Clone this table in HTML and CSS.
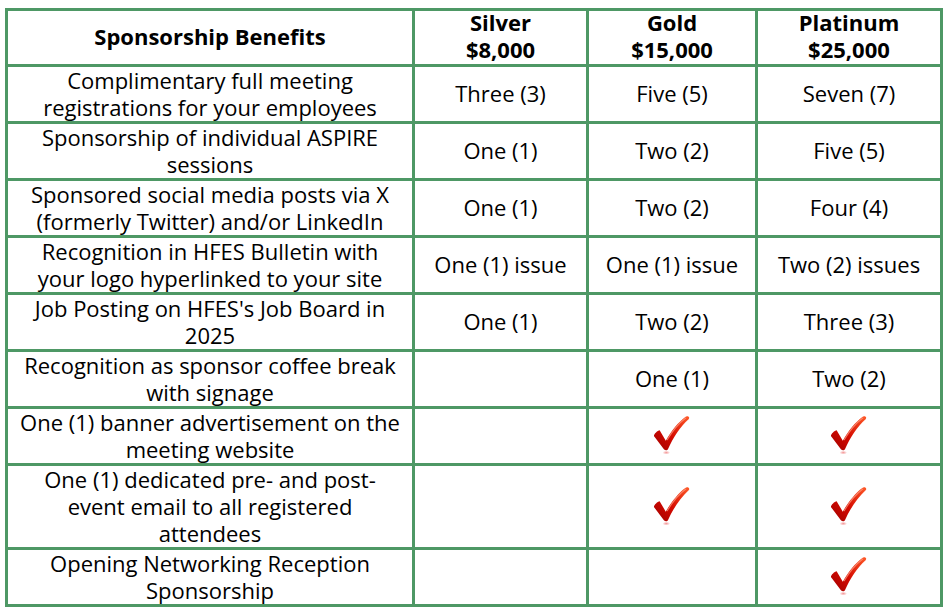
FILE: index.html
```html
<!DOCTYPE html>
<html lang="en">
<head>
<meta charset="utf-8">
<title>Sponsorship Benefits</title>
<link rel="stylesheet" href="styles.css">
</head>
<body>
<svg class="defs" width="0" height="0" aria-hidden="true">
  <defs>
    <linearGradient id="chk" x1="0" y1="1" x2="1" y2="0">
      <stop offset="0" stop-color="#9e0000"/>
      <stop offset="0.45" stop-color="#d40a00"/>
      <stop offset="1" stop-color="#ff5a28"/>
    </linearGradient>
    <radialGradient id="refl" cx="0.5" cy="0.5" r="0.5">
      <stop offset="0" stop-color="#f07a7a" stop-opacity="0.8"/>
      <stop offset="1" stop-color="#f07a7a" stop-opacity="0"/>
    </radialGradient>
    <symbol id="check" viewBox="0 0 42 42">
      <ellipse cx="15" cy="39.5" rx="4" ry="2" fill="url(#refl)"/>
      <path d="M2,22 C2,20 6,16 8,16 L14.5,27 C20,17 28,7 35,2 C37,0.5 40.5,2 38.5,4.5 C30,12 22,24 17,35.5 C16,37.5 14,37.5 12.5,36 Z" fill="url(#chk)"/>
      <path d="M16,26 C22,16 29,8 35.5,3.2" fill="none" stroke="#ff9a80" stroke-width="1.2" stroke-linecap="round" opacity="0.75"/>
    </symbol>
  </defs>
</svg>
<div class="table">
  <div class="cell head">Sponsorship Benefits</div>
  <div class="cell head">Silver<br>$8,000</div>
  <div class="cell head">Gold<br>$15,000</div>
  <div class="cell head">Platinum<br>$25,000</div>

  <div class="cell benefit">Complimentary full meeting<br>registrations for your employees</div>
  <div class="cell">Three (3)</div>
  <div class="cell">Five (5)</div>
  <div class="cell">Seven (7)</div>

  <div class="cell benefit">Sponsorship of individual ASPIRE<br>sessions</div>
  <div class="cell">One (1)</div>
  <div class="cell">Two (2)</div>
  <div class="cell">Five (5)</div>

  <div class="cell benefit">Sponsored social media posts via X<br>(formerly Twitter) and/or LinkedIn</div>
  <div class="cell">One (1)</div>
  <div class="cell">Two (2)</div>
  <div class="cell">Four (4)</div>

  <div class="cell benefit">Recognition in HFES Bulletin with<br>your logo hyperlinked to your site</div>
  <div class="cell">One (1) issue</div>
  <div class="cell">One (1) issue</div>
  <div class="cell">Two (2) issues</div>

  <div class="cell benefit">Job Posting on HFES's Job Board in<br>2025</div>
  <div class="cell">One (1)</div>
  <div class="cell">Two (2)</div>
  <div class="cell">Three (3)</div>

  <div class="cell benefit">Recognition as sponsor coffee break<br>with signage</div>
  <div class="cell"></div>
  <div class="cell">One (1)</div>
  <div class="cell">Two (2)</div>

  <div class="cell benefit">One (1) banner advertisement on the<br>meeting website</div>
  <div class="cell"></div>
  <div class="cell"><svg class="tick"><use href="#check"/></svg></div>
  <div class="cell"><svg class="tick"><use href="#check"/></svg></div>

  <div class="cell benefit">One (1) dedicated pre- and post-<br>event email to all registered<br>attendees</div>
  <div class="cell"></div>
  <div class="cell"><svg class="tick"><use href="#check"/></svg></div>
  <div class="cell"><svg class="tick"><use href="#check"/></svg></div>

  <div class="cell benefit">Opening Networking Reception<br>Sponsorship</div>
  <div class="cell"></div>
  <div class="cell"></div>
  <div class="cell"><svg class="tick"><use href="#check"/></svg></div>
</div>
</body>
</html>
```
FILE: styles.css
```css
html, body {
  margin: 0;
  padding: 0;
  background: #ffffff;
}

body {
  font-family: "Open Sans", "Liberation Sans", sans-serif;
  font-size: 22px;
  line-height: 27px;
  color: #000000;
}

.defs {
  position: absolute;
  width: 0;
  height: 0;
  overflow: hidden;
}

.table {
  display: grid;
  grid-template-columns: 404px 171px 166px 182px;
  grid-template-rows: 53px repeat(7, 54px) 81px 54px;
  gap: 3px;
  padding: 3px;
  background: #4e9865;
  width: max-content;
  margin: 8px 0 0 5px;
}

.cell {
  background: #ffffff;
  display: flex;
  align-items: center;
  justify-content: center;
  text-align: center;
  white-space: nowrap;
  padding-bottom: 2px;
  box-sizing: border-box;
}

.benefit {
  padding-bottom: 0;
  align-items: flex-start;
}

.head {
  font-weight: 700;
  line-height: 27px;
  padding-bottom: 3px;
}

.tick {
  width: 40px;
  height: 40px;
}
```
